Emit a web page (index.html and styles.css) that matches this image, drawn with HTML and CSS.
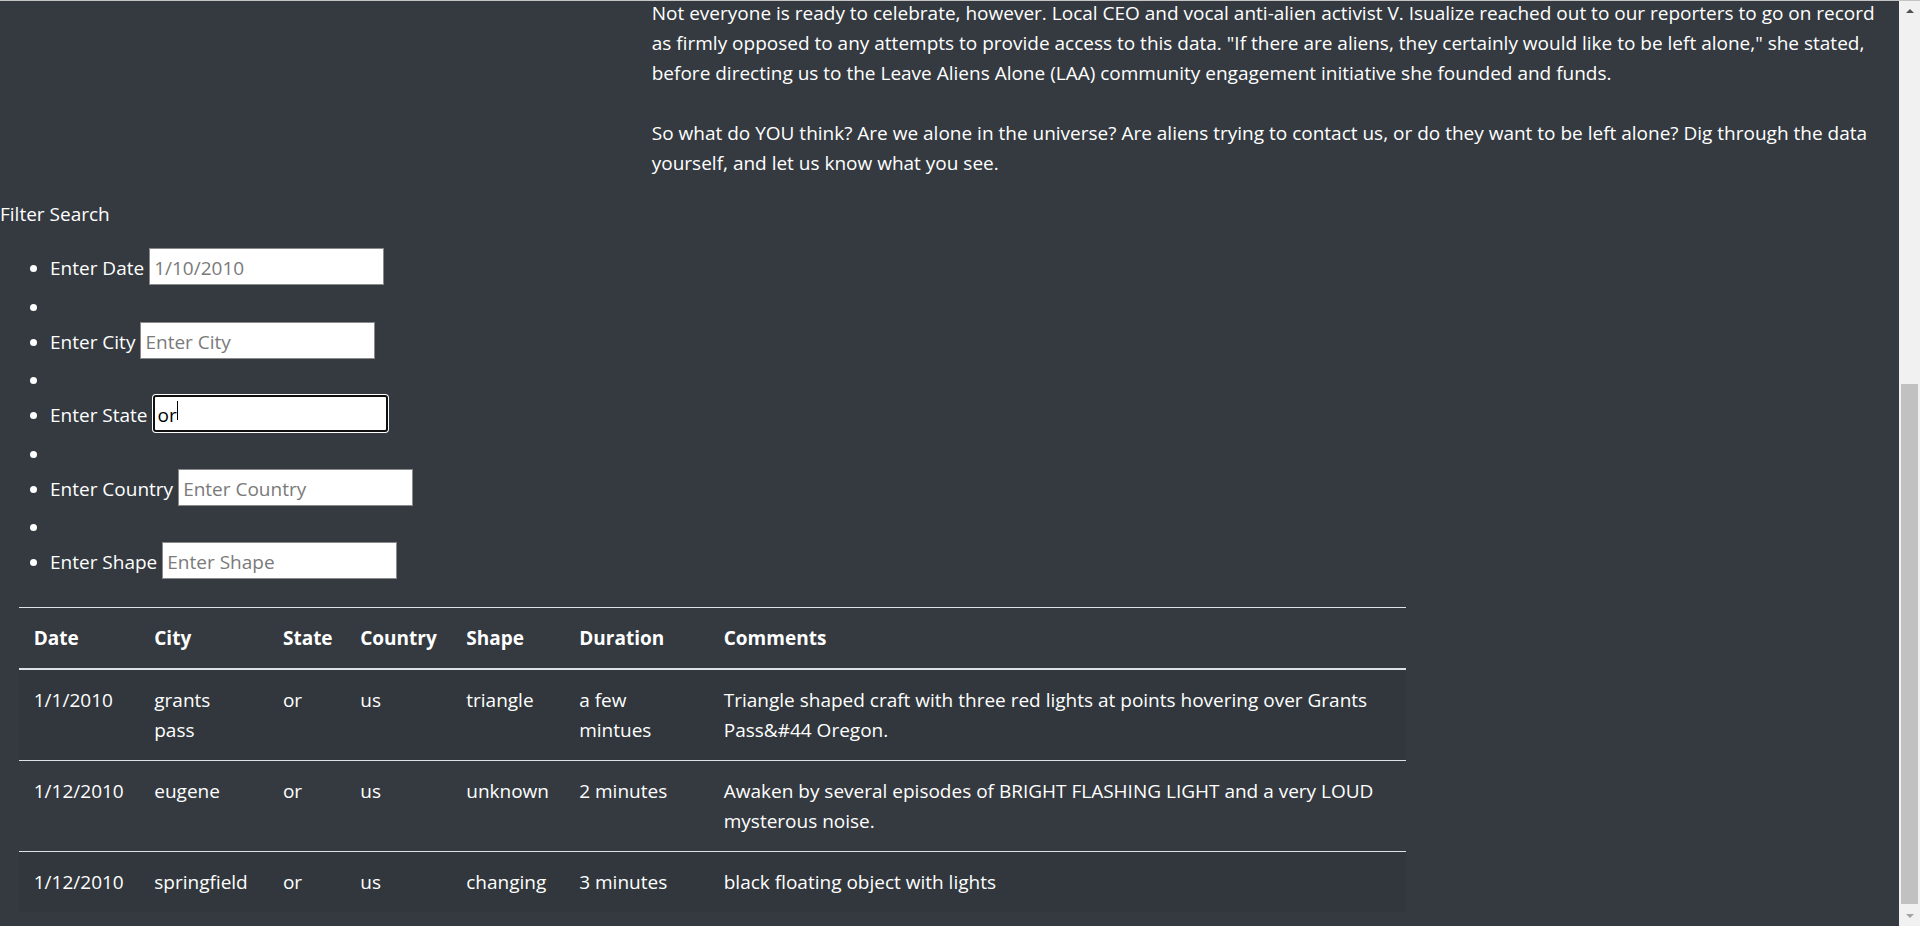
FILE: index.html
```html
<!DOCTYPE html>
<html lang="en">
<head>
<meta charset="utf-8">
<title>UFO Sightings</title>
<link rel="stylesheet" href="styles.css">
</head>
<body>
<div class="topline"></div>
<div class="window">
  <div class="page">
    <div class="intro">
      <div class="intro-side"></div>
      <div class="intro-main">
        <p class="story">Not everyone is ready to celebrate, however. Local CEO and vocal anti-alien activist V. Isualize reached out to our reporters to go on record as firmly opposed to any attempts to provide access to this data. "If there are aliens, they certainly would like to be left alone," she stated, before directing us to the Leave Aliens Alone (LAA) community engagement initiative she founded and funds.</p>
        <p class="story">So what do YOU think? Are we alone in the universe? Are aliens trying to contact us, or do they want to be left alone? Dig through the data yourself, and let us know what you see.</p>
      </div>
    </div>

    <div class="filter-title">Filter Search</div>
    <ul class="filter-list">
      <li class="filter"><label class="filter-label" for="datetime">Enter Date</label><input class="filter-input" id="datetime" type="text" placeholder="1/10/2010"></li>
      <li class="blank"></li>
      <li class="filter"><label class="filter-label" for="city">Enter City</label><input class="filter-input" id="city" type="text" placeholder="Enter City"></li>
      <li class="blank"></li>
      <li class="filter"><label class="filter-label" for="state">Enter State</label><span class="caret-wrap"><input class="filter-input is-focused" id="state" type="text" value="or" placeholder="Enter State"></span></li>
      <li class="blank"></li>
      <li class="filter"><label class="filter-label" for="country">Enter Country</label><input class="filter-input" id="country" type="text" placeholder="Enter Country"></li>
      <li class="blank"></li>
      <li class="filter"><label class="filter-label" for="shape">Enter Shape</label><input class="filter-input" id="shape" type="text" placeholder="Enter Shape"></li>
    </ul>

    <div class="table-area">
      <table class="ufo-table">
        <thead>
          <tr>
            <th class="c-date">Date</th>
            <th class="c-city">City</th>
            <th class="c-state">State</th>
            <th class="c-country">Country</th>
            <th class="c-shape">Shape</th>
            <th class="c-duration">Duration</th>
            <th class="c-comments">Comments</th>
          </tr>
        </thead>
        <tbody>
          <tr>
            <td>1/1/2010</td>
            <td>grants pass</td>
            <td>or</td>
            <td>us</td>
            <td>triangle</td>
            <td>a few mintues</td>
            <td>Triangle shaped craft with three red lights at points hovering over Grants Pass&amp;#44 Oregon.</td>
          </tr>
          <tr>
            <td>1/12/2010</td>
            <td>eugene</td>
            <td>or</td>
            <td>us</td>
            <td>unknown</td>
            <td>2 minutes</td>
            <td>Awaken by several episodes of BRIGHT FLASHING LIGHT and a very LOUD mysterous noise.</td>
          </tr>
          <tr>
            <td>1/12/2010</td>
            <td>springfield</td>
            <td>or</td>
            <td>us</td>
            <td>changing</td>
            <td>3 minutes</td>
            <td>black floating object with lights</td>
          </tr>
        </tbody>
      </table>
    </div>
  </div>

  <div class="scrollbar">
    <div class="sb-button"><span class="sb-arrow-up"></span></div>
    <div class="sb-track"><div class="sb-thumb"></div></div>
    <div class="sb-button"><span class="sb-arrow-down"></span></div>
  </div>
</div>
</body>
</html>
```

FILE: styles.css
```css
* {
  box-sizing: border-box;
}

html, body {
  margin: 0;
  padding: 0;
  height: 100%;
}

body {
  background: #343a40;
  color: #fff;
  font-family: "Open Sans", "Segoe UI", sans-serif;
  font-size: 19px;
  line-height: 30px;
  overflow: hidden;
}

.topline {
  height: 1px;
  background: #c4c4c4;
}

.window {
  display: flex;
  height: 925px;
}

.page {
  flex: 1;
  min-width: 0;
  overflow: hidden;
}

/* intro text */
.intro {
  display: flex;
  margin-top: -3px;
}

.intro-side {
  width: 633px;
  flex: none;
}

.intro-main {
  flex: 1;
  padding: 0 18.75px;
}

.story {
  margin: 0;
}

.story + .story {
  margin-top: 30px;
}

/* filters */
.filter-title {
  margin-top: 21px;
}

.filter-list {
  margin: 19px 0 21px 0;
  padding-left: 50px;
}

.filter-list li {
  min-height: 30px;
}

.filter-label {
  display: inline-block;
  margin-bottom: 8.5px;
  margin-right: 5px;
}

.filter-input {
  width: 235px;
  height: 37px;
  border: 1px solid #8a8a8a;
  border-radius: 0;
  padding: 3px 4px 0;
  background: #fff;
  color: #000;
  font: inherit;
  line-height: 30px;
  outline: none;
  vertical-align: baseline;
}

.filter-input::placeholder {
  color: #7a7a7a;
}

.filter-input.is-focused {
  border: 2px solid #101010;
  border-radius: 3px;
  box-shadow: 0 0 0 1px #fff;
  padding-left: 3px;
}

.caret-wrap {
  position: relative;
  display: inline-block;
}

.caret-wrap::after {
  content: "";
  position: absolute;
  left: 24px;
  top: 6px;
  width: 1px;
  height: 19px;
  background: #000;
}

/* table */
.table-area {
  padding: 0 18.75px;
}

.ufo-table {
  width: 1387px;
  border-collapse: collapse;
  table-layout: fixed;
  color: #fff;
}

.ufo-table th,
.ufo-table td {
  padding: 15px;
  text-align: left;
  vertical-align: top;
  border-top: 1px solid #dee2e6;
}

.ufo-table thead th {
  vertical-align: bottom;
  border-bottom: 2px solid #dee2e6;
  font-weight: 700;
}

.ufo-table tbody tr:nth-of-type(odd) {
  background: rgba(0, 0, 0, 0.05);
}

.c-date { width: 120.5px; }
.c-city { width: 128.7px; }
.c-state { width: 77.3px; }
.c-country { width: 106px; }
.c-shape { width: 113px; }
.c-duration { width: 144.5px; }
.c-comments { width: auto; }

/* scrollbar */
.scrollbar {
  width: 21px;
  flex: none;
  background: #f1f1f1;
  display: flex;
  flex-direction: column;
}

.sb-button {
  height: 20px;
  flex: none;
  display: flex;
  align-items: center;
  justify-content: center;
}

.sb-arrow-up {
  width: 0;
  height: 0;
  border-left: 4px solid transparent;
  border-right: 4px solid transparent;
  border-bottom: 4px solid #505050;
}

.sb-arrow-down {
  width: 0;
  height: 0;
  border-left: 4px solid transparent;
  border-right: 4px solid transparent;
  border-top: 4px solid #a3a3a3;
}

.sb-track {
  flex: 1;
  display: flex;
  flex-direction: column;
  padding: 363px 2px 2px 2px;
}

.sb-thumb {
  flex: 1;
  background: #c1c1c1;
}
```
